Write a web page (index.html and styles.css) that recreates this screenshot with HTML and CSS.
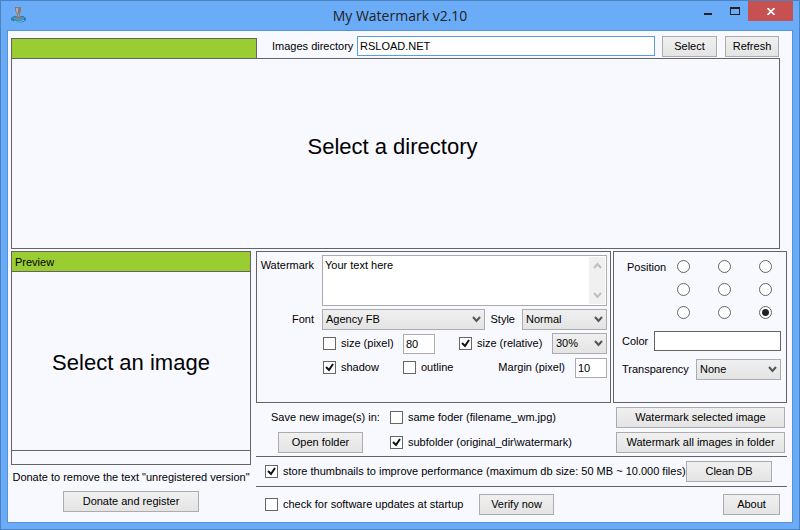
FILE: index.html
```html
<!DOCTYPE html>
<html lang="en">
<head>
    <meta charset="UTF-8">
    <meta name="viewport" content="width=device-width, initial-scale=1.0">
    <title>My Watermark v2.10</title>
    <link rel="stylesheet" href="styles.css">
</head>
<body>
    <div class="window">
        <!-- Title bar -->
        <header class="titlebar">
            <svg class="app-icon" width="16" height="17" viewBox="0 0 16 17">
                <path d="M0 11l3-2h9l3 2v2l-3 2-4 1-4-1-4-2z" fill="#2a78a8"/>
                <path d="M1 11l4-1h6l3 1-3 2-3 1-4-1z" fill="#3f9bd0"/>
                <path d="M3 14l3 1 3 0 4-2" stroke="#8cc8ea" fill="none"/>
                <path d="M4 0h6v4L9 6v3l2 1v1l-3 1-4-1v-1l2-1V6L4 4z" fill="#857c78"/>
                <path d="M5 1h2v4l1 4-1 1V6L5 4z" fill="#b8aca4"/>
            </svg>
            <h1>My Watermark v2.10</h1>
            <div class="window-buttons">
                <button class="win-btn" aria-label="Minimize">
                    <svg width="10" height="10" viewBox="0 0 10 10"><path d="M1 7h8v2H1z" fill="#222"/></svg>
                </button>
                <button class="win-btn" aria-label="Maximize">
                    <svg width="10" height="8" viewBox="0 0 10 8"><path d="M0 0h10v8H0zM1 2v5h8V2z" fill="#222" fill-rule="evenodd"/></svg>
                </button>
                <button class="win-btn close" aria-label="Close">
                    <svg width="8" height="7" viewBox="0 0 8 7"><path d="M0.500 0l7 7M7.500 0l-7 7" stroke="#fff" stroke-width="1.600" fill="none"/></svg>
                </button>
            </div>
        </header>

        <main class="client">
            <!-- Directory bar -->
            <div class="directory-bar">
                <div class="tab"></div>
                <label for="directory">Images directory</label>
                <input type="text" id="directory" class="field directory-input" value="RSLOAD.NET">
                <button class="btn select-btn">Select</button>
                <button class="btn refresh-btn">Refresh</button>
            </div>

            <div class="thumbnails"><p class="message">Select a directory</p></div>

            <div class="lower">
                <!-- Preview -->
                <section class="left">
                    <div class="preview">
                        <h2>Preview</h2>
                        <div class="preview-image"><p class="message">Select an image</p></div>
                        <div class="preview-status"></div>
                    </div>
                    <p class="donate-text">Donate to remove the text "unregistered version"</p>
                    <button class="btn donate-btn">Donate and register</button>
                </section>

                <section class="right">
                    <div class="groups">
                        <!-- Watermark text settings -->
                        <div class="group text-group">
                            <label class="row-label top-label" for="watermark">Watermark</label>
                            <div class="textarea-box">
                                <textarea id="watermark">Your text here</textarea>
                                <div class="scrollbar">
                                    <svg width="9" height="7" viewBox="0 0 9 7"><path d="M1 6l3.500-4L8 6" stroke="#bfbfbf" stroke-width="2" fill="none"/></svg>
                                    <svg width="9" height="7" viewBox="0 0 9 7"><path d="M1 1l3.500 4L8 1" stroke="#bfbfbf" stroke-width="2" fill="none"/></svg>
                                </div>
                            </div>

                            <label class="row-label" for="font">Font</label>
                            <div class="row">
                                <select id="font" class="font-select"><option>Agency FB</option></select>
                                <label for="style">Style</label>
                                <select id="style" class="style-select"><option>Normal</option></select>
                            </div>

                            <div class="row indent">
                                <label class="check pixel-check"><input type="checkbox">size (pixel)</label>
                                <input type="text" class="field number" value="80" aria-label="Size in pixels">
                                <label class="check relative-check"><input type="checkbox" checked>size (relative)</label>
                                <select class="percent-select" aria-label="Relative size"><option>30%</option></select>
                            </div>

                            <div class="row indent">
                                <label class="check pixel-check"><input type="checkbox" checked>shadow</label>
                                <label class="check"><input type="checkbox">outline</label>
                                <label class="margin-label" for="margin">Margin (pixel)</label>
                                <input type="text" id="margin" class="field number" value="10">
                            </div>
                        </div>

                        <!-- Position and colour settings -->
                        <div class="group look-group">
                            <div class="position">
                                <span>Position</span>
                                <div class="radios">
                                    <input type="radio" name="position" aria-label="Top left">
                                    <input type="radio" name="position" aria-label="Top center">
                                    <input type="radio" name="position" aria-label="Top right">
                                    <input type="radio" name="position" aria-label="Middle left">
                                    <input type="radio" name="position" aria-label="Middle center">
                                    <input type="radio" name="position" aria-label="Middle right">
                                    <input type="radio" name="position" aria-label="Bottom left">
                                    <input type="radio" name="position" aria-label="Bottom center">
                                    <input type="radio" name="position" aria-label="Bottom right" checked>
                                </div>
                            </div>
                            <div class="look-row">
                                <label for="color">Color</label>
                                <input type="color" id="color" value="#ffffff">
                            </div>
                            <div class="look-row">
                                <label for="transparency">Transparency</label>
                                <select id="transparency" class="style-select"><option>None</option></select>
                            </div>
                        </div>
                    </div>

                    <!-- Saving -->
                    <div class="save">
                        <span class="save-label">Save new image(s) in:</span>
                        <label class="check"><input type="checkbox">same foder (filename_wm.jpg)</label>
                        <button class="btn">Watermark selected image</button>
                        <button class="btn open-btn">Open folder</button>
                        <label class="check"><input type="checkbox" checked>subfolder (original_dir\watermark)</label>
                        <button class="btn">Watermark all images in folder</button>
                    </div>

                    <div class="option-row">
                        <label class="check"><input type="checkbox" checked>store thumbnails to improve performance (maximum db size: 50 MB ~ 10.000 files)</label>
                        <button class="btn clean-btn">Clean DB</button>
                    </div>

                    <div class="option-row last">
                        <label class="check updates-check"><input type="checkbox">check for software updates at startup</label>
                        <button class="btn verify-btn">Verify now</button>
                        <button class="btn about-btn">About</button>
                    </div>
                </section>
            </div>
        </main>
    </div>
</body>
</html>
```
FILE: styles.css
```css
/* Reset */
* {
    margin: 0;
    padding: 0;
    box-sizing: border-box;
}

body, button, input, select, textarea {
    font-family: "Liberation Sans", Arial, sans-serif;
    font-size: 11px;
    line-height: 15px;
    color: #000;
}

label, span {
    white-space: nowrap;
}

/* Window frame */
.window {
    display: flex;
    flex-direction: column;
    min-height: 100vh;
    padding: 0 6px 6px;
    background-color: #6aacf8;
    border: 1px solid #4a83c0;
}

.titlebar {
    display: grid;
    grid-template-columns: 112px 1fr 112px;
    height: 29px;
}

.app-icon {
    margin: 6px 0 0 4px;
}

h1 {
    font-family: "Open Sans", sans-serif;
    font-size: 14px;
    font-weight: normal;
    line-height: 30px;
    text-align: center;
    color: #222;
}

.window-buttons {
    display: flex;
    justify-content: flex-end;
}

.win-btn {
    display: flex;
    justify-content: center;
    align-items: center;
    width: 27px;
    height: 20px;
    background: none;
    border: none;
}

.close {
    width: 45px;
    background-color: #c75050;
}

.client {
    flex: 1;
    display: flex;
    flex-direction: column;
    padding: 5px 5px 0 3px;
    background-color: #f8f8ff;
    border: 1px solid #5592d8;
}

/* Controls */
.btn {
    height: 21px;
    background: linear-gradient(#f0f0f0, #e4e4e4);
    border: 1px solid #acacac;
    white-space: nowrap;
}

.field {
    height: 20px;
    padding: 0 2px;
    background-color: #fff;
    border: 1px solid #ababab;
}

select {
    appearance: none;
    height: 21px;
    padding: 0 3px;
    border: 1px solid #acacac;
    border-radius: 0;
    background: url("data:image/svg+xml,%3Csvg xmlns='http://www.w3.org/2000/svg' width='9' height='7'%3E%3Cpath d='M1 1l3.500 4L8 1' stroke='%23555' stroke-width='2' fill='none'/%3E%3C/svg%3E") no-repeat right 3px center, linear-gradient(#f0f0f0, #e4e4e4);
}

.check {
    display: flex;
    align-items: center;
    gap: 5px;
}

input[type="checkbox"] {
    appearance: none;
    width: 13px;
    height: 13px;
    background-color: #fff;
    border: 1px solid #666;
}

input[type="checkbox"]:checked {
    background-image: url("data:image/svg+xml,%3Csvg xmlns='http://www.w3.org/2000/svg' width='11' height='11'%3E%3Cpath d='M2 5l3 3L9 2' stroke='%23111' stroke-width='2' fill='none'/%3E%3C/svg%3E");
}

input[type="radio"] {
    appearance: none;
    width: 13px;
    height: 13px;
    background-color: #fff;
    border: 1px solid #666;
    border-radius: 50%;
}

input[type="radio"]:checked {
    background-image: radial-gradient(circle, #222 3px, transparent 4px);
}

input[type="color"] {
    appearance: none;
    width: 127px;
    height: 20px;
    background-color: #fff;
    border: 1px solid #646464;
}

input[type="color"]::-webkit-color-swatch-wrapper {
    padding: 0;
}

input[type="color"]::-webkit-color-swatch {
    border: none;
}

.message {
    font-size: 22px;
    line-height: 24px;
}

/* Directory bar */
.directory-bar {
    display: flex;
    height: 22px;
    margin-right: 8px;
}

.directory-bar label {
    width: 77px;
    margin: 3px 8px 0 15px;
}

.tab {
    width: 246px;
    height: 20px;
    align-self: flex-end;
    background-color: #9acd32;
    border: 1px solid #646464;
    border-bottom: none;
}

.directory-input {
    flex: 1;
    min-width: 0;
    border-color: #569de5;
}

.select-btn {
    width: 55px;
    margin: 0 8px 0 7px;
}

.refresh-btn {
    width: 54px;
}

.thumbnails {
    flex: 1;
    display: flex;
    justify-content: center;
    align-items: center;
    min-height: 191px;
    margin: 0 7px 2px 0;
    padding-right: 6px;
    padding-bottom: 14px;
    border: 1px solid #646464;
}

/* Lower part */
.lower {
    display: grid;
    grid-template-columns: 240px 1fr;
    gap: 5px;
}

.left {
    display: flex;
    flex-direction: column;
    align-items: center;
    padding-bottom: 10px;
}

.preview {
    flex: 1;
    align-self: stretch;
    display: flex;
    flex-direction: column;
    border: 1px solid #646464;
}

h2 {
    height: 20px;
    padding-left: 3px;
    font-size: 11px;
    font-weight: normal;
    line-height: 20px;
    background-color: #9acd32;
    border-bottom: 1px solid #646464;
}

.preview-image {
    flex: 1;
    display: flex;
    justify-content: center;
    align-items: center;
    padding-top: 4px;
    border-bottom: 1px solid #646464;
}

.preview-status {
    height: 13px;
}

.donate-text {
    margin: 5px 0 6px;
    white-space: nowrap;
}

.donate-btn {
    width: 136px;
}

/* Settings groups */
.groups {
    display: grid;
    grid-template-columns: 1fr 174px;
    gap: 2px;
    height: 152px;
}

.group {
    border: 1px solid #646464;
}

.text-group {
    display: grid;
    grid-template-columns: 57px 1fr;
    align-content: start;
    gap: 3px 8px;
    padding: 3px 3px 0 0;
}

.row-label {
    align-self: center;
    text-align: right;
}

.top-label {
    align-self: start;
    padding-top: 3px;
}

.textarea-box {
    display: flex;
    height: 51px;
    padding: 1px;
    background-color: #fff;
    border: 1px solid #ababab;
}

textarea {
    flex: 1;
    min-width: 0;
    padding: 1px;
    border: none;
    resize: none;
    overflow: hidden;
}

.scrollbar {
    display: flex;
    flex-direction: column;
    justify-content: space-between;
    align-items: center;
    width: 16px;
    padding: 5px 0;
    background-color: #f0f0f0;
}

.row {
    display: flex;
    align-items: center;
    height: 21px;
}

.indent {
    grid-column: 2;
    padding-left: 1px;
}

.font-select {
    flex: 1;
    margin-right: 6px;
}

.style-select {
    width: 85px;
    margin-left: auto;
}

.row .style-select {
    margin-left: 7px;
}

.pixel-check {
    width: 80px;
}

.number {
    width: 32px;
}

.relative-check {
    margin-left: 24px;
}

.percent-select {
    width: 55px;
    margin-left: auto;
}

.margin-label {
    margin: 0 10px 0 auto;
}

.look-group {
    padding: 8px 5px 0 8px;
}

.position {
    display: flex;
    justify-content: space-between;
    padding: 0 9px 0 5px;
    margin-bottom: 12px;
}

.radios {
    display: grid;
    grid-template-columns: repeat(3, 13px);
    gap: 10px 28px;
}

.look-row {
    display: flex;
    justify-content: space-between;
    align-items: center;
    margin-bottom: 8px;
}

/* Saving */
.save {
    display: grid;
    grid-template-columns: 104px 1fr 169px;
    gap: 4px 15px;
    align-items: center;
    padding: 4px 2px 3px 15px;
    border-bottom: 1px solid #646464;
}

.save-label {
    text-align: center;
}

.open-btn {
    width: 85px;
}

.save .open-btn {
    margin-left: 7px;
}

.option-row {
    display: flex;
    align-items: center;
    height: 30px;
    padding: 0 15px 0 9px;
    border-bottom: 1px solid #646464;
}

.clean-btn {
    width: 86px;
    margin-left: auto;
}

.last {
    height: 35px;
    padding-right: 7px;
    border-bottom: none;
}

.updates-check {
    width: 214px;
}

.verify-btn {
    width: 75px;
}

.about-btn {
    width: 57px;
    margin-left: auto;
}
```
